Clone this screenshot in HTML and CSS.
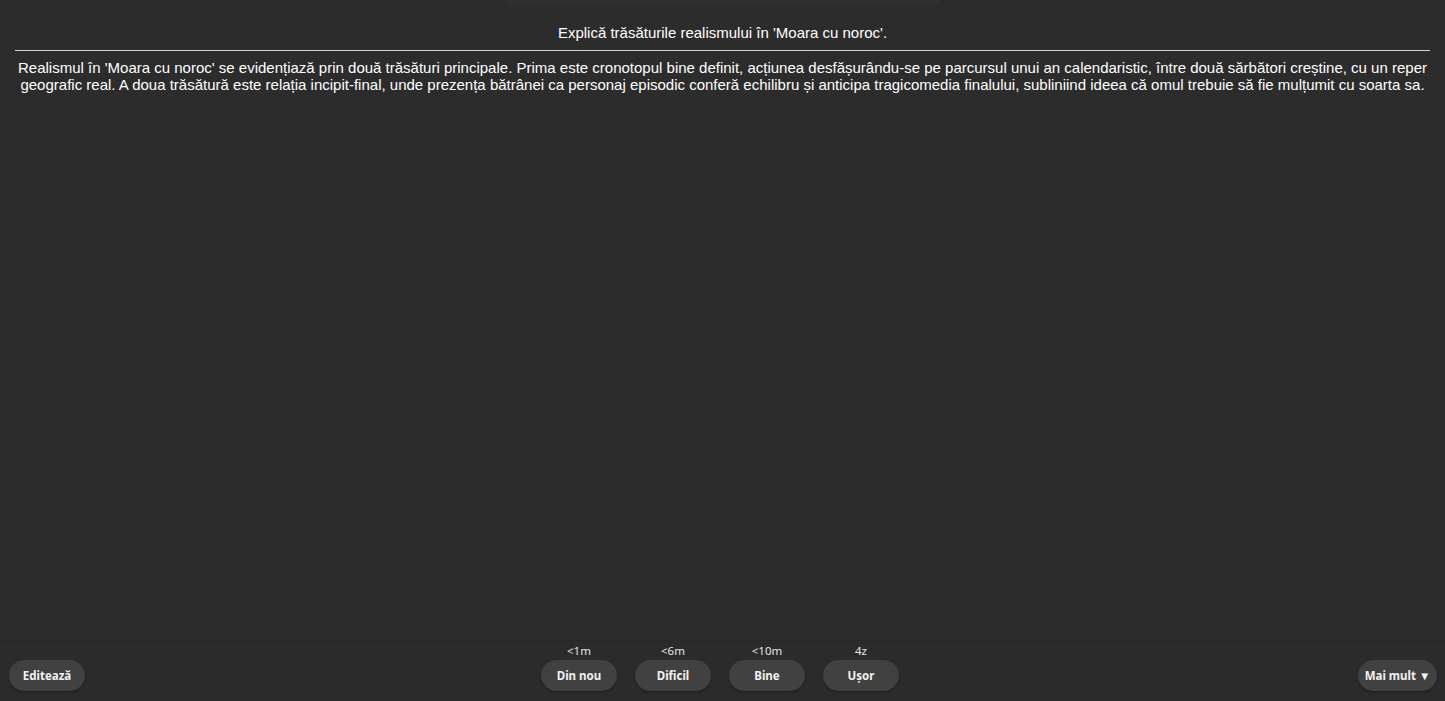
FILE: index.html
```html
<!DOCTYPE html>
<html lang="ro">
<head>
<meta charset="utf-8">
<title>Anki</title>
<link rel="stylesheet" href="styles.css">
</head>
<body>
<div class="page">
  <main class="review">
    <div class="topcap"></div>
    <div class="card">
      <div class="question">Explică trăsăturile realismului în 'Moara cu noroc'.</div>
      <hr class="answer-sep">
      <div class="answer">Realismul în 'Moara cu noroc' se evidențiază prin două trăsături principale. Prima este cronotopul bine definit, acțiunea desfășurându-se pe parcursul unui an calendaristic, între două sărbători creștine, cu un reper geografic real. A doua trăsătură este relația incipit-final, unde prezența bătrânei ca personaj episodic conferă echilibru și anticipa tragicomedia finalului, subliniind ideea că omul trebuie să fie mulțumit cu soarta sa.</div>
    </div>
  </main>
  <footer class="bottombar">
    <div class="side left">
      <button class="btn">Editează</button>
    </div>
    <div class="answers">
      <div class="ease"><span class="time">&lt;1m</span><button class="btn">Din nou</button></div>
      <div class="ease"><span class="time">&lt;6m</span><button class="btn">Dificil</button></div>
      <div class="ease"><span class="time">&lt;10m</span><button class="btn">Bine</button></div>
      <div class="ease"><span class="time">4z</span><button class="btn">Ușor</button></div>
    </div>
    <div class="side right">
      <button class="btn more">Mai mult ▼</button>
    </div>
  </footer>
</div>
</body>
</html>
```
FILE: styles.css
```css
html, body {
  margin: 0;
  padding: 0;
  background: #2c2c2c;
  height: 100%;
}
.page {
  display: flex;
  flex-direction: column;
  height: 701px;
  overflow: hidden;
}
.review {
  flex: 1;
  display: flex;
  flex-direction: column;
}
.topcap {
  width: 435px;
  height: 5px;
  margin: 0 auto;
  background: #303030;
  border-radius: 0 0 8px 8px;
}
.card {
  padding: 19px 15px 0;
  text-align: center;
  font-family: "Liberation Sans", Arial, sans-serif;
  font-size: 15px;
  line-height: 17px;
  color: #ffffff;
}
.question {
  line-height: 18px;
}
.answer-sep {
  margin: 8px 0 8px;
  border: 0;
  border-top: 1px solid #d2d2d2;
  height: 0;
}
.bottombar {
  background: #2b2b2b;
  border-top: 1px solid #272727;
  display: grid;
  grid-template-columns: 1fr auto 1fr;
  align-items: end;
  padding: 0 8px 10px 9px;
  box-sizing: border-box;
  height: 61px;
  font-family: "Noto Sans", "Open Sans", sans-serif;
}
.side {
  display: flex;
}
.side.right {
  justify-content: flex-end;
}
.answers {
  display: flex;
  gap: 18px;
  margin-right: 6px;
}
.ease {
  display: flex;
  flex-direction: column;
  align-items: center;
}
.time {
  font-size: 11.5px;
  line-height: 14px;
  color: #e6e6e6;
  margin-bottom: 2px;
}
.btn {
  width: 76px;
  height: 31px;
  border: 0;
  border-radius: 16px;
  background: #414141;
  color: #f2f2f2;
  font-family: "Noto Sans", "Open Sans", sans-serif;
  font-weight: 700;
  font-size: 11.5px;
  padding: 0;
  box-shadow: 0 1px 2px rgba(0,0,0,0.35);
  cursor: pointer;
}
.btn.more {
  width: 79px;
}
```
